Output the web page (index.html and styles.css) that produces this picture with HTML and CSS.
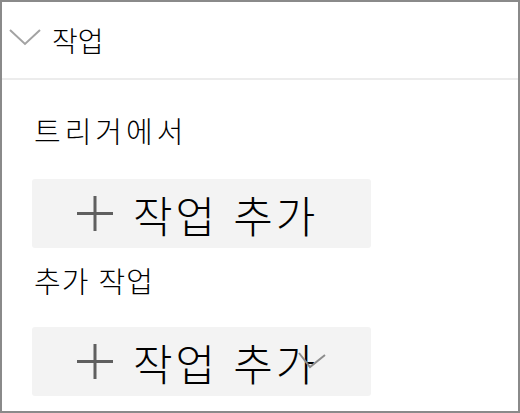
FILE: index.html
```html
<!DOCTYPE html>
<html lang="ko">
<head>
    <meta charset="utf-8">
    <title>작업</title>
    <link rel="stylesheet" href="styles.css">
</head>
<body>

<div class="panel">
    <div class="panel-header">
        <svg class="chevron" width="32" height="17" viewBox="0 0 32 17">
            <polyline points="1,1 16,15 31,1" fill="none" stroke="#a3a3a3" stroke-width="2"/>
        </svg>
        <span class="panel-title">작업</span>
    </div>

    <div class="panel-body">
        <div class="section-label first">트리거에서</div>
        <button class="add-button">
            <svg class="plus" width="36" height="36" viewBox="0 0 36 36">
                <path d="M18 0 V35 M0 17.5 H36" stroke="#5f5f5f" stroke-width="3" fill="none"/>
            </svg>
            <span class="add-text">작업 추가</span>
        </button>

        <div class="section-label">추가 작업</div>
        <button class="add-button">
            <svg class="plus" width="36" height="36" viewBox="0 0 36 36">
                <path d="M18 0 V35 M0 17.5 H36" stroke="#5f5f5f" stroke-width="3" fill="none"/>
            </svg>
            <span class="add-text">작업 추가</span>
            <svg class="caret" width="28" height="17" viewBox="0 0 28 17">
                <polyline points="1,1 12,15 27,3" fill="none" stroke="#8c8c8c" stroke-width="2"/>
            </svg>
        </button>
    </div>
</div>

</body>
</html>
```

FILE: styles.css
```css
body {
    margin: 0;
    padding: 0;
    background-color: #fff;
    font-family: "Noto Sans CJK KR", "Noto Sans", sans-serif;
    font-weight: 300;
    color: #000;
}
.panel {
    width: 520px;
    height: 413px;
    box-sizing: border-box;
    border: 2px solid #8a8a8a;
    background-color: #fff;
    overflow: hidden;
}
.panel-header {
    height: 76px;
    display: flex;
    align-items: center;
    border-bottom: 2px solid #ececec;
}
.chevron {
    margin-left: 7px;
    margin-right: 11px;
    margin-bottom: 6px;
}
.panel-title {
    font-size: 28px;
    line-height: 36px;
    letter-spacing: 0;
}
.panel-body {
    display: flex;
    flex-direction: column;
    align-items: flex-start;
    padding-left: 30px;
}
.section-label {
    font-size: 29px;
    line-height: 36px;
    letter-spacing: 4px;
    margin-top: 14px;
    margin-bottom: 29px;
    padding-left: 2px;
}
.section-label.first {
    margin-top: 32px;
    margin-bottom: 31px;
}
.add-button {
    position: relative;
    width: 339px;
    height: 69px;
    display: flex;
    align-items: center;
    padding: 0 0 0 45px;
    border: none;
    border-radius: 3px;
    background-color: #f3f3f3;
    font-family: inherit;
    font-weight: 300;
    color: #000;
    cursor: pointer;
}
.add-button + .section-label {
    margin-top: 14px;
    letter-spacing: 1px;
}
.plus {
    margin-right: 20px;
    flex-shrink: 0;
}
.add-text {
    font-size: 43px;
    line-height: 50px;
    letter-spacing: 3px;
}
.caret {
    position: absolute;
    left: 266px;
    top: 25px;
}
```
